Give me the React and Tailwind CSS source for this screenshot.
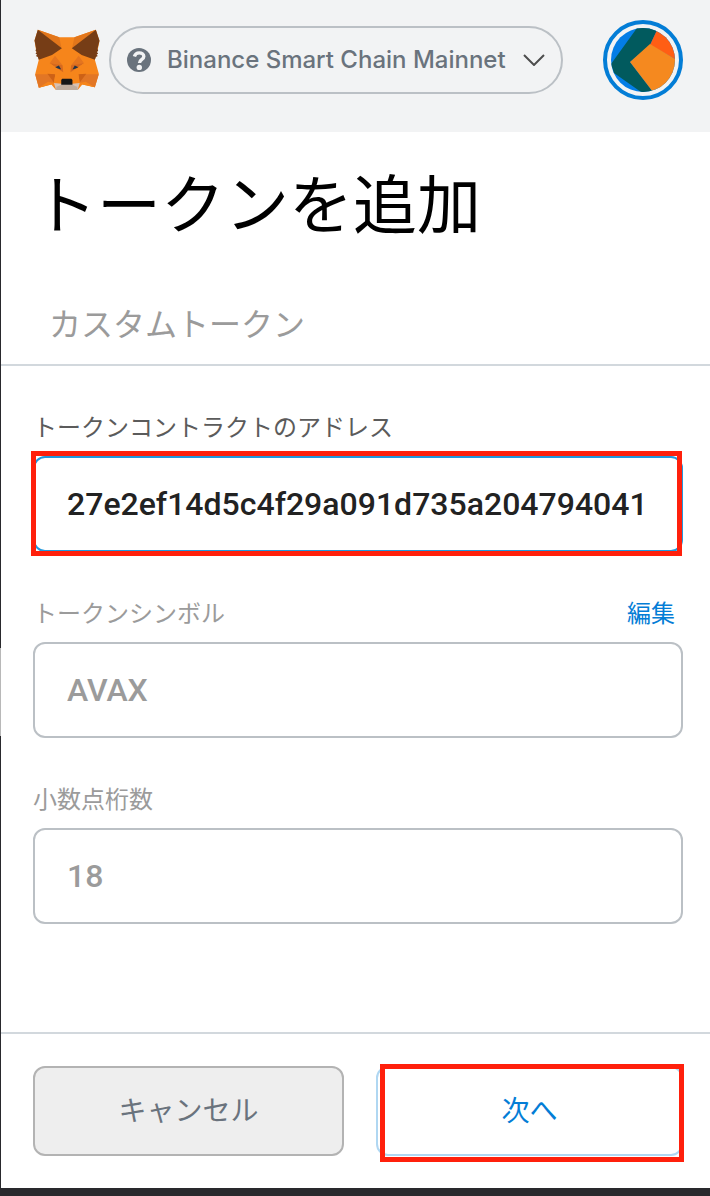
import React, { useEffect, useRef, useState } from 'react'

function FoxLogo() {
  return (
    <svg viewBox="42 41 203 188" className="h-[62px] w-[68px] shrink-0" aria-hidden="true">
      <path fill="#f6851b" d="M55 43 120 66H166L231 43 242 78 236 106 228 134 240 177 228 218 190 209 176 226H110L96 209 58 219 47 178 58 134 50 108 45 76Z" />
      <path fill="#e2761b" d="M55 43 120 66 127 99ZM231 43 166 66 159 99Z" />
      <path fill="#763d16" d="M55 43 128 99 98 120 58 134 55 126 49 123 53 119 48 115 52 111 48 107 50 101 45 76ZM231 43 158 99 188 120 228 134 231 126 237 123 233 119 238 115 234 111 238 107 236 101 242 76Z" />
      <path fill="#e4751f" d="M107 122 91 145 104 151 130 151ZM179 122 195 145 182 151 156 151Z" />
      <path fill="#d5691f" d="M91 145 130 151 132 172 118 163ZM195 145 156 151 154 172 168 163Z" />
      <path fill="#e27625" d="M47 178H104V205L58 219ZM240 178H182V205L228 218Z" />
      <path fill="#f6851b" d="M58 219 86 201 106 205 96 209ZM228 218 200 201 180 205 190 209Z" />
      <path fill="#cd6116" d="M84 177 108 178 104 203ZM202 177 178 178 182 203Z" />
      <path fill="#f6851b" d="M91 145 120 165 128 193 104 205 108 178ZM195 145 166 165 158 193 182 205 178 178Z" />
      <path fill="#233447" d="M108 157 119 152 126 164 116 161ZM178 157 167 152 160 164 170 161Z" />
      <path fill="#d7c1b3" d="M104 205 127 207H159L182 205 176 226H110Z" />
      <path fill="#c0ad9e" d="M112 216 127 210H159L174 216 176 226H110Z" />
      <path fill="#161616" d="M129 192H157L160 196V210H126V196Z" />
    </svg>
  )
}

function QuestionIcon() {
  return (
    <svg viewBox="0 0 24 24" className="size-6 shrink-0" aria-hidden="true">
      <circle cx="12" cy="12" r="12" fill="#6a737d" />
      <path d="M7.4 8.4C8.2 5.8 10 4.9 12.2 4.9 14.8 4.9 16.8 6.3 16.8 8.5 16.8 11.5 12.5 11.2 12.5 15" fill="none" stroke="#f2f3f4" strokeWidth="3.4" />
      <circle cx="12.3" cy="19.4" r="2.7" fill="#f2f3f4" />
    </svg>
  )
}

function AccountAvatar() {
  return (
    <button
      type="button"
      aria-label="アカウント"
      className="ml-auto flex size-20 shrink-0 items-center justify-center rounded-full border-4 border-[#037dd6]"
    >
      <svg viewBox="0 0 64 64" className="size-16 rounded-full" aria-hidden="true">
        <rect width="64" height="64" fill="#037de6" />
        <path fill="#015a5e" d="M26 0H47L39 17 19 34 42 64H30L3 45 0 36Z" />
        <path fill="#ff5e14" d="M47 0H64V31L39 17Z" />
        <path fill="#f5891f" d="M39 16 64 31V64H42L19 34Z" />
      </svg>
    </button>
  )
}

function Highlight({ className }) {
  return <div className={`pointer-events-none absolute border-[5px] border-[#ff200c] ${className}`} />
}

const inputClass =
  'block h-24 w-full rounded-xl border-2 bg-white px-8 font-[Roboto,"Noto_Sans_CJK_JP",sans-serif] text-[32px] font-medium outline-none'
const labelClass = 'mb-3 block text-2xl leading-9'

export default function App() {
  const addressRef = useRef(null)
  const [address, setAddress] = useState('27e2ef14d5c4f29a091d735a204794041')

  // keep the end of the address in view
  useEffect(() => {
    addressRef.current.scrollLeft = addressRef.current.scrollWidth
  }, [])

  return (
    <div className="relative flex min-h-screen flex-col border-b-8 border-l border-[#29292d] bg-white font-['Noto_Sans_CJK_JP',sans-serif]">
      <div className="absolute top-[648px] -left-px h-[88px] w-px bg-[#b8b8b8]" />

      <header className="flex items-center gap-2 bg-[#f2f3f4] pt-5 pr-[27px] pb-8 pl-8">
        <FoxLogo />
        <button
          type="button"
          className="flex h-[68px] w-[454px] items-center gap-4 rounded-full border-2 border-[#bbc0c5] px-4 text-[#6a737d]"
        >
          <QuestionIcon />
          <span className="font-[Inter,sans-serif] text-2xl font-medium whitespace-nowrap">
            Binance Smart Chain Mainnet
          </span>
          <svg viewBox="0 0 22 12" className="ml-auto h-3 w-[22px] shrink-0" aria-hidden="true">
            <path d="M1 1 11 11 21 1" fill="none" stroke="#4d4d4d" strokeWidth="2" />
          </svg>
        </button>
        <AccountAvatar />
      </header>

      <h1 className="pt-5 pl-8 text-[64px] leading-[96px] text-black">トークンを追加</h1>

      <div className="flex border-b-2 border-[#d2d8dd] pt-11 pl-4">
        <button type="button" className="px-8 pb-3 text-[32px] leading-[60px] text-[#9b9b9b]">
          カスタムトークン
        </button>
      </div>

      <form className="flex flex-1 flex-col" onSubmit={(e) => e.preventDefault()}>
        <div className="flex flex-1 flex-col gap-[42px] pt-[42px] pr-[27px] pb-12 pl-8">
          <div>
            <label htmlFor="address" className={`${labelClass} text-[#5b5b5b]`}>
              トークンコントラクトのアドレス
            </label>
            <div className="relative">
              <input
                id="address"
                ref={addressRef}
                value={address}
                onChange={(e) => setAddress(e.target.value)}
                className={`${inputClass} border-[#2298dc] text-[#222]`}
              />
              <Highlight className="-top-[5px] right-px -bottom-1 -left-0.5" />
            </div>
          </div>

          <div>
            <div className="flex justify-between">
              <label htmlFor="symbol" className={`${labelClass} text-[#9b9b9b]`}>
                トークンシンボル
              </label>
              <button type="button" className="mb-3 pr-2 text-2xl leading-9 text-[#037dd6]">
                編集
              </button>
            </div>
            <input id="symbol" defaultValue="AVAX" className={`${inputClass} border-[#bbc0c5] text-[#9b9b9b]`} />
          </div>

          <div>
            <label htmlFor="decimals" className={`${labelClass} text-[#9b9b9b]`}>
              小数点桁数
            </label>
            <input id="decimals" defaultValue="18" className={`${inputClass} border-[#bbc0c5] text-[#9b9b9b]`} />
          </div>
        </div>

        <footer className="flex gap-8 border-t-2 border-[#d2d8dd] py-8 pr-[27px] pl-8">
          <button
            type="button"
            className="h-[90px] flex-1 rounded-xl border-2 border-[#b3b3b3] bg-[#eee] pb-1 text-[28px] text-[#6a737d]"
          >
            キャンセル
          </button>
          <div className="relative flex-1">
            <button
              type="submit"
              className="h-[90px] w-full rounded-xl border-2 border-[#b0d7f2] bg-white pb-1 text-[28px] text-[#037dd6]"
            >
              次へ
            </button>
            <Highlight className="-top-0.5 -right-px -bottom-1.5 left-1" />
          </div>
        </footer>
      </form>
    </div>
  )
}
